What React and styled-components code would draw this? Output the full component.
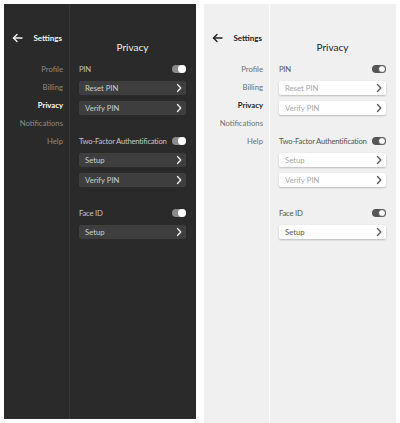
import React from "react";
import styled, { createGlobalStyle, ThemeProvider } from "styled-components";

const GlobalStyle = createGlobalStyle`
  html, body {
    margin: 0;
    padding: 0;
    background: #ffffff;
    font-family: "Lato", "Noto Sans", sans-serif;
  }
  * { box-sizing: border-box; }
`;

const dark = {
  bg: "#2b2a2a",
  divider: "#373636",
  heading: "#eeeeee",
  header: "#f2f2f2",
  label: "#c4c4c4",
  navText: "#8a8a8a",
  navActive: "#ffffff",
  btnBg: "#3e3e3e",
  btnShadow: "none",
  btnText: "#cfcfcf",
  btnMuted: "#cfcfcf",
  chevron: "#f0f0f0",
  track: "#8c8c8c",
  knob: "#ffffff",
  knobBorder: "transparent",
  height: "415px",
};

const light = {
  bg: "#f0f0f0",
  divider: "#fbfbfb",
  heading: "#222222",
  header: "#222222",
  label: "#555555",
  navText: "#6f6f6f",
  navActive: "#222222",
  btnBg: "#ffffff",
  btnShadow: "0 1px 2px rgba(0, 0, 0, 0.22)",
  btnText: "#555555",
  btnMuted: "#a8a8a8",
  chevron: "#555555",
  track: "#555555",
  knob: "#ffffff",
  knobBorder: "#555555",
  height: "419px",
};

const Page = styled.div`
  display: flex;
  gap: 8px;
  padding: 4px 4px 0 4px;
  height: 423px;
  overflow: hidden;
`;

const Panel = styled.div`
  width: 192px;
  height: ${(props) => props.theme.height};
  background: ${(props) => props.theme.bg};
  display: grid;
  grid-template-columns: 66px 1fr;
`;

const Sidebar = styled.div`
  border-right: 1px solid ${(props) => props.theme.divider};
  padding: 28px 6px 0 8px;
`;

const Header = styled.div`
  display: flex;
  align-items: center;
  justify-content: space-between;
  height: 12px;
  margin-bottom: 16px;
  color: ${(props) => props.theme.header};
  font-size: 8px;
  font-weight: 700;
  padding-right: 1px;
`;

const NavItem = styled.div`
  height: 18px;
  line-height: 18px;
  text-align: right;
  font-size: 7.7px;
  font-weight: ${(props) => (props.$active ? 700 : 400)};
  color: ${(props) =>
    props.$active ? props.theme.navActive : props.theme.navText};
`;

const Main = styled.div`
  padding: 37px 10px 0 9px;
`;

const Heading = styled.div`
  text-align: center;
  font-size: 10px;
  line-height: 12px;
  color: ${(props) => props.theme.heading};
  margin-bottom: 10px;
`;

const Section = styled.div`
  display: flex;
  flex-direction: column;
  gap: 6px;
  margin-bottom: 20px;
`;

const Row = styled.div`
  display: flex;
  align-items: center;
  justify-content: space-between;
  height: 12px;
  font-size: 7.7px;
  letter-spacing: -0.25px;
  white-space: nowrap;
  color: ${(props) => props.theme.label};
`;

const Track = styled.div`
  flex: none;
  width: 14px;
  height: 8px;
  border-radius: 4px;
  background: ${(props) => props.theme.track};
  position: relative;
`;

const Knob = styled.div`
  position: absolute;
  top: 50%;
  right: 0;
  transform: translateY(-50%);
  width: 8px;
  height: 8px;
  border-radius: 50%;
  background: ${(props) => props.theme.knob};
  border: 1px solid ${(props) => props.theme.knobBorder};
`;

const Button = styled.div`
  display: flex;
  align-items: center;
  justify-content: space-between;
  height: 14px;
  padding: 0 3px 0 6px;
  border-radius: 2px;
  background: ${(props) => props.theme.btnBg};
  box-shadow: ${(props) => props.theme.btnShadow};
  font-size: 7.7px;
  color: ${(props) =>
    props.$muted ? props.theme.btnMuted : props.theme.btnText};
  svg {
    stroke: ${(props) => props.theme.chevron};
  }
`;

const Toggle = () => (
  <Track>
    <Knob />
  </Track>
);

const Chevron = () => (
  <svg width="8" height="10" viewBox="0 0 8 10" fill="none" strokeWidth="1.3">
    <polyline points="2.5,1.5 5.8,5 2.5,8.5" strokeLinecap="round" strokeLinejoin="round" />
  </svg>
);

const BackArrow = () => (
  <svg width="11" height="10" viewBox="0 0 11 10" fill="none" stroke="currentColor" strokeWidth="1.4">
    <line x1="1.5" y1="5" x2="10" y2="5" strokeLinecap="round" />
    <polyline points="5,1.5 1.5,5 5,8.5" strokeLinecap="round" strokeLinejoin="round" />
  </svg>
);

const nav = ["Profile", "Billing", "Privacy", "Notifications", "Help"];

const sections = [
  {
    label: "PIN",
    buttons: [
      { text: "Reset PIN", muted: true },
      { text: "Verify PIN", muted: true },
    ],
  },
  {
    label: "Two-Factor Authentification",
    buttons: [
      { text: "Setup", muted: true },
      { text: "Verify PIN", muted: true },
    ],
  },
  {
    label: "Face ID",
    buttons: [{ text: "Setup", muted: false }],
  },
];

const SettingsPanel = () => (
  <Panel>
    <Sidebar>
      <Header>
        <BackArrow />
        <span>Settings</span>
      </Header>
      {nav.map((item) => (
        <NavItem key={item} $active={item === "Privacy"}>
          {item}
        </NavItem>
      ))}
    </Sidebar>
    <Main>
      <Heading>Privacy</Heading>
      {sections.map((section) => (
        <Section key={section.label}>
          <Row>
            <span>{section.label}</span>
            <Toggle />
          </Row>
          {section.buttons.map((b, i) => (
            <Button key={i} $muted={b.muted}>
              <span>{b.text}</span>
              <Chevron />
            </Button>
          ))}
        </Section>
      ))}
    </Main>
  </Panel>
);

export default function App() {
  return (
    <>
      <GlobalStyle />
      <Page>
        <ThemeProvider theme={dark}>
          <SettingsPanel />
        </ThemeProvider>
        <ThemeProvider theme={light}>
          <SettingsPanel />
        </ThemeProvider>
      </Page>
    </>
  );
}
